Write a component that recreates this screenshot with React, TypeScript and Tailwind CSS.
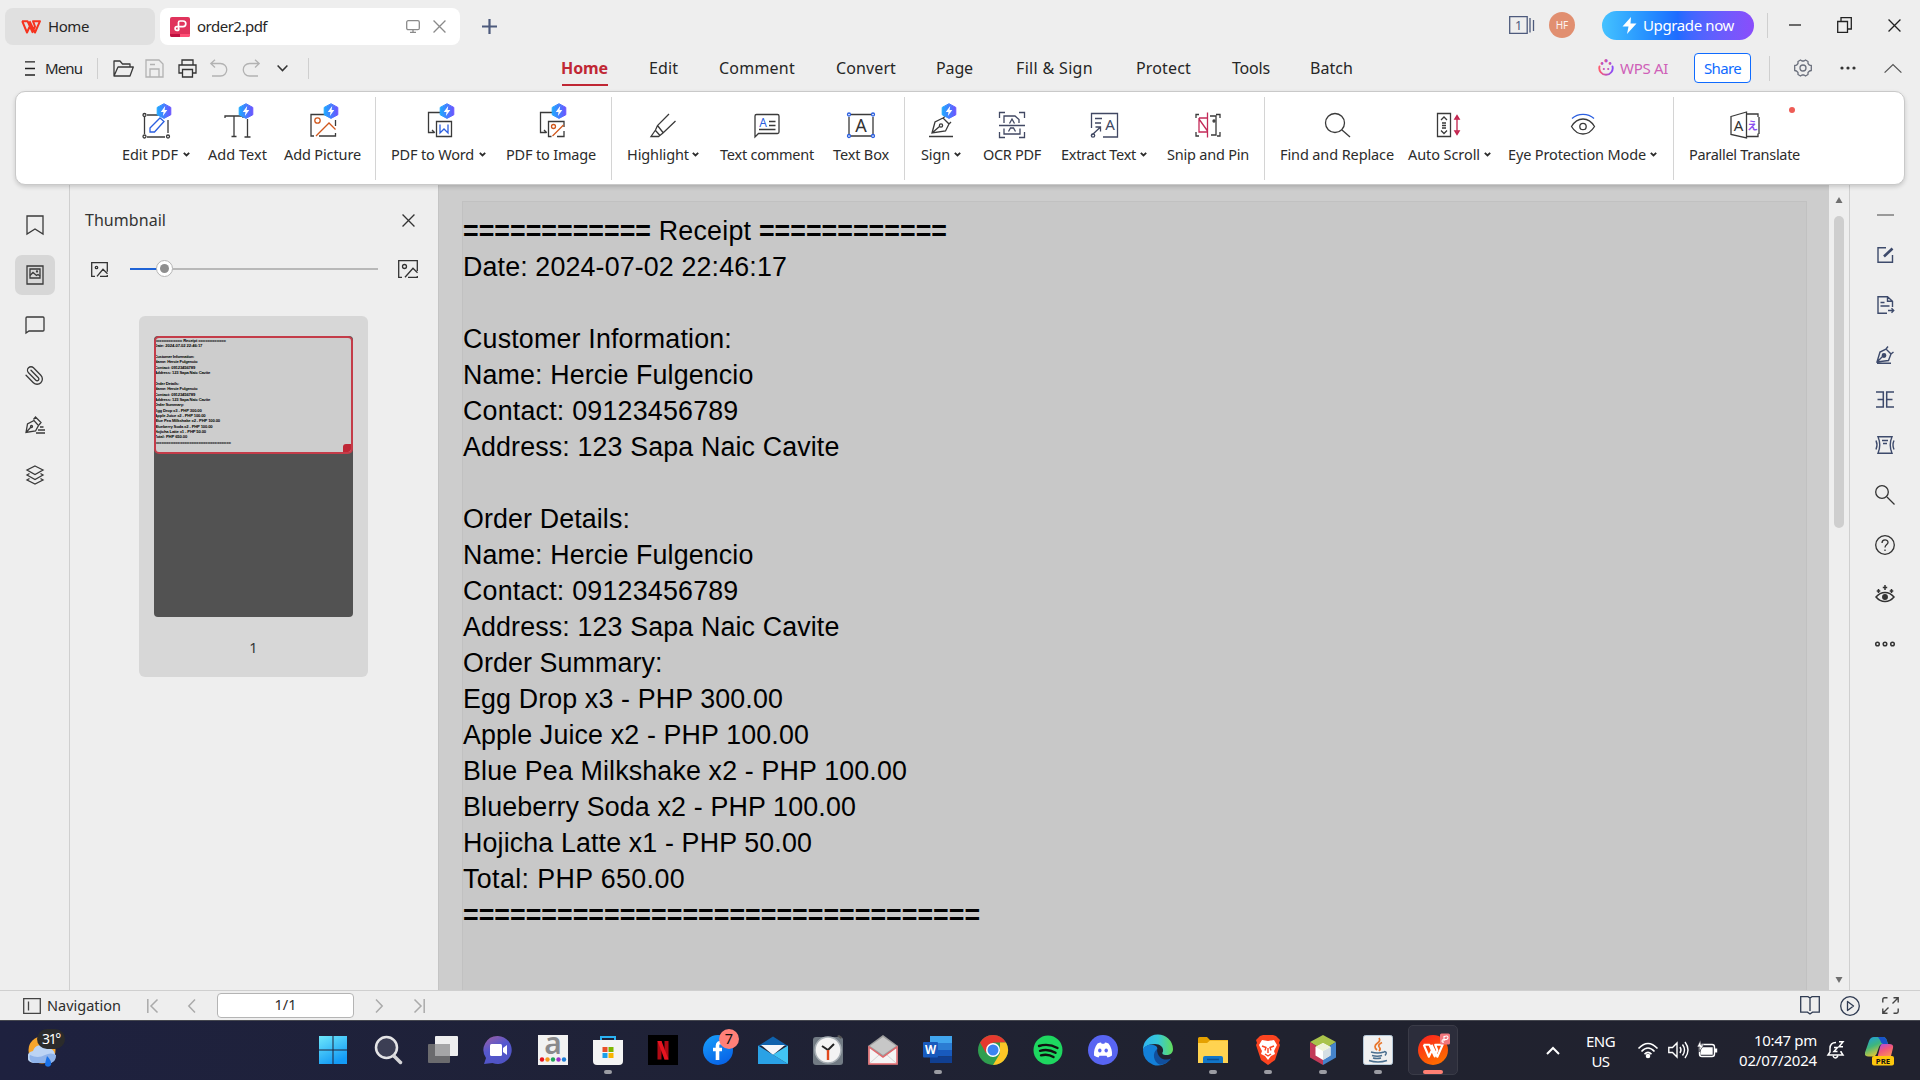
import { useLayoutEffect, useRef, useState, type ReactNode } from "react";
import { Paperclip } from "lucide-react";

const UI = "font-['Noto_Sans',sans-serif]";

/* Single-line label whose tracking is adjusted so that it fills a fixed width. */
function Fit({ w, t, className = "" }: { w: number; t: string; className?: string }) {
  const ref = useRef<HTMLSpanElement>(null);
  const [ls, setLs] = useState(0);
  useLayoutEffect(() => {
    if (ref.current) setLs((w - ref.current.getBoundingClientRect().width) / t.length);
  }, [w, t]);
  return (
    <span className={"inline-block shrink-0 whitespace-pre " + className} style={{ width: w }}>
      <span ref={ref} style={{ letterSpacing: ls }}>{t}</span>
    </span>
  );
}

function Ico({ w, h, sw = 1.3, className = "", children }: { w: number; h: number; sw?: number; className?: string; children: ReactNode }) {
  return (
    <svg width={w} height={h} viewBox={`0 0 ${w} ${h}`} fill="none" stroke="currentColor" strokeWidth={sw} className={"shrink-0 overflow-visible " + className}>
      {children}
    </svg>
  );
}

const Glyph = ({ x, y, s, c = "#333", t, b = "400" }: { x: number; y: number; s: number; c?: string; t: string; b?: string }) => (
  <text x={x} y={y} fontSize={s} fill={c} stroke="none" textAnchor="middle" fontWeight={b} fontFamily="Noto Sans, Noto Sans CJK JP, sans-serif">{t}</text>
);

function Badge() {
  return (
    <g stroke="none">
      <path d="M26 .7 32.8 4.4v7.4L26 15.4 19.2 11.8V4.4z" fill="url(#vip)" stroke="url(#vip)" strokeWidth="1" strokeLinejoin="round" />
      <path d="M27.2 3 22.8 8.900h2.7L24.900 13l4.400-6h-2.700z" fill="#fff" />
    </g>
  );
}

type Item = { t: string; lw: number; box: string; icon: ReactNode; drop?: boolean; dot?: boolean };

const DocTo = (
  <path d="M27 14V9.500H7.500V29.500h6M11 27l2.800 2.800" />
);

const groups: Item[][] = [
  [
    { t: "Edit PDF", lw: 56, box: "ml-[106px] w-[68px]", drop: true, icon: <>
      <path d="M9 12h16M30 17v13M9 34h18M6.500 14v17" /><circle cx="6.500" cy="12" r="1.500" /><circle cx="6.500" cy="33.500" r="1.500" /><circle cx="30" cy="33.500" r="1.500" />
      <path d="m12 25 10-10 4 3.500L16.500 29H12z" stroke="#2b5fe0" /><Badge /></> },
    { t: "Add Text", lw: 59, box: "ml-[18px] w-[59px]", icon: <><path d="M5 15v-2h18v2M14 13v20M11.500 33.500h5M27.500 16v18M24.500 34h6" /><Badge /></> },
    { t: "Add Picture", lw: 77, box: "ml-[17px] w-[77px]", icon: <>
      <path d="M20 11.500H6V33h3M30.500 17v6M30.500 30v3H14" /><circle cx="12.500" cy="17.500" r="2.700" stroke="#d0571c" /><path d="m11 33 13-13 6.500 6.500" stroke="#d0571c" /><Badge /></> },
  ],
  [
    { t: "PDF to Word", lw: 83, box: "ml-[15px] w-[95px]", drop: true, icon: <>{DocTo}<path d="M15.500 18.500h15v15h-15z" /><path d="M19 21.500v8.500l4-4 4 4v-8.500" stroke="#2b5fe0" /><Badge /></> },
    { t: "PDF to Image", lw: 90, box: "ml-[20px] w-[90px]", icon: <>{DocTo}<path d="M31 24v-5.500H15.500v15h3M31 28v5.500h-7" /><circle cx="20.500" cy="23.500" r="2" stroke="#d0571c" /><path d="m19.500 33 11-11" stroke="#d0571c" /><Badge /></> },
  ],
  [
    { t: "Highlight", lw: 62, box: "ml-[15px] w-[72px]", drop: true, icon: <path d="M24 11 12.500 22.500l-2 4.500L6 33.500h7.500l4.500-3.500L30.500 18M12.500 22.500l5.500 7M10.500 27.500l4.500 5" /> },
    { t: "Text comment", lw: 94, box: "ml-[21px] w-[94px]", icon: <><path d="M6 34V13a1.500 1.500 0 0 1 1.500-1.500h21A1.500 1.500 0 0 1 30 13v16a1.500 1.500 0 0 1-1.500 1.500H9.500z" /><path d="M20 18.500h6.500M20 22.500h6.500M10 26.500h16.500" /><Glyph x={14} y={24} s={12} c="#2b5fe0" t="A" /></> },
    { t: "Text Box", lw: 56, box: "ml-[19px] w-[56px]", icon: <><path d="M8 11.500h20M8 33h20M6 14v17M30 14v17" /><g stroke="#2b5fe0"><circle cx="6" cy="11.500" r="1.500" /><circle cx="30" cy="11.500" r="1.500" /><circle cx="6" cy="33" r="1.500" /><circle cx="30" cy="33" r="1.500" /></g><Glyph x={18} y={29} s={18} t="A" /></> },
  ],
  [
    { t: "Sign", lw: 29, box: "ml-[16px] w-[40px]", drop: true, icon: <><path d="M6 33.500h24M9 30l3-11 8-4 6 6-3.500 7zM9 30l7.500-6.500M20 15l2-1.500M26 21l2-2" /><circle cx="18" cy="22.500" r="1.600" /><Badge /></> },
    { t: "OCR PDF", lw: 58, box: "ml-[22px] w-[58px]", icon: <g stroke="#414863"><path d="M5.500 15v-5.500H11M25 9.500h5.500V15M30.500 29v5.500H25M11 34.500H5.500V29M5 22.500h26M10 20v-7h11l4 3.500V20M10 25.500V31h16v-5.500" /><path d="M15.500 20.500 18 16 20.500 20.500M14.500 28.500l2-3.500h3l2 3.500" /></g> },
    { t: "Extract Text", lw: 75, box: "ml-[20px] w-[86px]", drop: true, icon: <g stroke="#414863"><path d="M5.500 25V10.500h26V34H17M6 32l8.500-8M9.500 24h5v4.500M9 15.500h7M9 20h6" /><circle cx="7" cy="32.500" r="1.700" /><Glyph x={24} y={27} s={15} c="#414863" t="A" /></g> },
    { t: "Snip and Pin", lw: 82, box: "ml-[20px] w-[82px]", icon: <><path d="M9 11.500H6V15M6 29v4h3M20 13h6v19h-5M26 11.500h4V15M30 29v4h-3" /><path d="M17.500 9.500v25M9 15h8.500M9 15v14h8.500M9 16l8.500 12" stroke="#c32a58" /><circle cx="24" cy="18" r="1" /></> },
  ],
  [
    { t: "Find and Replace", lw: 114, box: "ml-[15px] w-[114px]", icon: <><circle cx="16" cy="20" r="9.500" /><path d="m23 27 8 7" /></> },
    { t: "Auto Scroll", lw: 72, box: "ml-[14px] w-[83px]", drop: true, icon: <><path d="M5.500 10.500h13v23h-13zM9 17l3-3 3 3M9 27.500l3 3 3-3M10 20h4M10 22.500h4M10 25h4" /><path d="M25 12v20M22.800 16l2.200-3.500 2.200 3.500zM22.800 28l2.200 3.500 2.200-3.500z" stroke="#c3224d" /></> },
    { t: "Eye Protection Mode", lw: 138, box: "ml-[17px] w-[149px]", drop: true, icon: <><path d="M6.500 23.500c3-5 7-7.500 11.500-7.500s8.500 2.500 11.500 7.500c-3 5-7 7.500-11.500 7.500s-8.500-2.500-11.500-7.500z" /><circle cx="18" cy="23.500" r="3.200" /><path d="M7 15.500c6-5.500 16-5.500 22 0" stroke="#2b5fe0" /></> },
  ],
  [
    { t: "Parallel Translate", lw: 111, box: "ml-[15px] w-[111px]", dot: true, icon: <><path d="M4 13.500 19.500 9v26L4 31.500zM20 11h11v3M20 33.500h11v-3M32 14v17" /><Glyph x={11.500} y={27.500} s={15} t="A" /><Glyph x={25.500} y={27} s={11} c="#8a4df0" t="え" b="700" /></> },
  ],
];

const sepMargin = ["", "ml-[14px]", "ml-[15px]", "ml-[15px]", "ml-[15px]", "ml-[16px]"];

const Chev = ({ className = "" }: { className?: string }) => (
  <Ico w={7} h={5} sw={1.8} className={className}><path d="m.8.800 2.700 2.700L6.200.800" /></Ico>
);

function Ribbon() {
  return (
    <div className="relative z-10 mx-[15px] flex h-[94px] shrink-0 rounded-[10px] border border-[#c9c9c9] bg-white shadow-[0_2px_4px_rgba(0,0,0,0.16)]">
      {groups.map((g, gi) => (
        <div key={gi} className="flex">
          {gi > 0 && <div className={"mt-[5px] h-[83px] w-px bg-[#d4d4d4] " + sepMargin[gi]} />}
          {g.map((it) => (
            <div key={it.t} className={"relative flex shrink-0 flex-col items-center pt-[11px] " + it.box}>
              <Ico w={36} h={36} className="text-[#3a3a3a]">{it.icon}</Ico>
              <div className="mt-[5px] flex w-full items-center justify-between text-[14.5px] leading-[20px] text-[#2c2c2c]">
                <Fit w={it.lw} t={it.t} />
                {it.drop && <Chev className="mt-px" />}
              </div>
              {it.dot && <span className="absolute right-[5px] top-[15px] h-[6px] w-[6px] rounded-full bg-[#ee5c55]" />}
            </div>
          ))}
        </div>
      ))}
    </div>
  );
}

const WpsMark = ({ w, h, c, sw }: { w: number; h: number; c: string; sw: number }) => (
  <svg width={w} height={h} viewBox="0 0 20 14" fill="none" stroke={c} strokeWidth={sw} strokeLinejoin="round" className="shrink-0">
    <path d="M1 1.200h5.500l5 11L14 6.500 12 1.200h7L14 12.500 8.500 1.200M1.200 1.200 6 12.500 8.500 7" />
  </svg>
);

const Cross = ({ s, sw = 1.2, className = "" }: { s: number; sw?: number; className?: string }) => (
  <svg width={s} height={s} viewBox="0 0 12 12" stroke="currentColor" strokeWidth={sw} className={"shrink-0 " + className}><path d="m.5.500 11 11M11.500.500l-11 11" /></svg>
);

function TitleBar() {
  return (
    <div className="flex h-[50px] shrink-0 items-start pl-[5px] text-[15px] leading-[37px] text-[#262626]">
      <div className="mt-2 flex h-[37px] w-[150px] items-center rounded-lg bg-[#e0e0e0] pl-4">
        <WpsMark w={20} h={14} c="#f5331f" sw={2} />
        <Fit w={41} t="Home" className="ml-[7px]" />
      </div>
      <div className="ml-[5px] mt-2 flex h-[37px] w-[300px] items-center rounded-lg bg-white pl-[10px]">
        <svg width="20" height="20" viewBox="0 0 20 20" className="shrink-0">
          <rect width="20" height="20" rx="2" fill="#e0335c" />
          <path d="M0 17h10v3H2a2 2 0 0 1-2-2z" fill="#c01040" /><path d="M10 17h10v1a2 2 0 0 1-2 2h-8z" fill="#ff5076" />
          <path d="M8.500 12.800V5.500q0-1.500 1.500-1.500h3a2.700 2.700 0 0 1 0 5.600H7a1.900 1.900 0 0 0 0 3.800q2 0 2-2" fill="none" stroke="#fff" strokeWidth="1.700" />
        </svg>
        <Fit w={70} t="order2.pdf" className="ml-[7px]" />
        <Ico w={14} h={13} className="ml-[139px] text-[#8a8a8a]"><rect x=".7" y=".7" width="12.600" height="9" rx="1.500" /><path d="M7 10v2.300M4 12.300h6" /></Ico>
        <Cross s={13} className="ml-[13px] text-[#8a8a8a]" />
      </div>
      <Ico w={15} h={15} sw={2.2} className="ml-[22px] mt-[19px] text-[#4d5a7c]"><path d="M7.500 0v15M0 7.500h15" /></Ico>
      <div className="ml-auto flex h-[50px] items-center">
        <Ico w={26} h={18} className="text-[#4d5a7c]"><path d="M.7.700h17.500v16.600H.7zM21 2v14.500M24.500 4v11" /><Glyph x={9.500} y={14} s={12.500} c="#4d5a7c" t="1" /></Ico>
        <div className="mr-[27px] ml-[14px] flex h-[26px] w-[26px] items-center justify-center rounded-full bg-[#e18f70] text-[10px] text-white/90">HF</div>
        <div className="mr-[13px] flex h-[29px] w-[152px] items-center rounded-full bg-linear-to-r from-[#45c2ff] via-[#1f6bff] to-[#8a4dfb] pl-[20px] text-[15px] text-white">
          <svg width="15" height="17" viewBox="0 0 15 17" className="shrink-0"><path d="M9 0 .5 9.500H6.500L5 17 14.500 6.500H8.500z" fill="#fff" /></svg>
          <Fit w={91} t="Upgrade now" className="ml-[6px]" />
        </div>
        <div className="h-[25px] w-px bg-[#cfcfcf]" />
        <Ico w={12} h={2} sw={1.3} className="ml-[21px] text-[#222]"><path d="M0 1h12" /></Ico>
        <Ico w={15} h={16} className="ml-9 text-[#222]"><path d="M.7 4.500h9.800v10.800H.7zM4 4V.700h10.300v11.300H11" /></Ico>
        <Cross s={13} className="ml-9 mr-[19px] text-[#222]" />
      </div>
    </div>
  );
}

const menuTabs: [string, number, string][] = [
  ["Edit", 29, "ml-[40px]"], ["Comment", 76, "ml-[41px]"], ["Convert", 60, "ml-[41px]"], ["Page", 37, "ml-[40px]"],
  ["Fill & Sign", 77, "ml-[43px]"], ["Protect", 55, "ml-[43px]"], ["Tools", 38, "ml-[41px]"], ["Batch", 43, "ml-[40px]"],
];

function MenuBar() {
  return (
    <div className="flex h-[41px] shrink-0 items-center pb-[5px] text-[15px] leading-[20px] text-[#262626]">
      <Ico w={10} h={15} className="ml-[25px] text-[#222]"><path d="M0 .800h10M0 7.500h10M0 14h10" /></Ico>
      <Fit w={37} t="Menu" className="ml-[10px]" />
      <div className="ml-[15px] h-[21px] w-px bg-[#cfcfcf]" />
      <Ico w={21} h={17} className="ml-[15px] text-[#3a3a3a]"><path d="M1 16V1h6l2.500 3H17v3M1 16 5 7h15.300L17 16z" strokeLinejoin="round" /></Ico>
      <Ico w={19} h={19} className="ml-[11px] text-[#b2b2b2]"><path d="M1 1h13l4 4v13H1zM5 18v-8h9v8M5 5.500h5" /></Ico>
      <Ico w={19} h={19} className="ml-[14px] text-[#333]"><path d="M4 6V1h11v5M4 14H1V6h17v8h-3M4.500 10.500h10V18h-10z" /></Ico>
      <Ico w={18} h={18} className="ml-[13px] text-[#b2b2b2]"><path d="M5 .700.800 4.500 5 8.500M1 4.500h9.500a6 6 0 0 1 0 12.500H2" /></Ico>
      <Ico w={18} h={18} className="ml-[14px] text-[#b2b2b2]"><path d="m13 .700 4.200 3.800L13 8.500M17 4.500H7.500a6 6 0 0 0 0 12.500H16" /></Ico>
      <Ico w={11} h={7} sw={1.5} className="ml-[17px] text-[#333]"><path d="m.6.600 4.900 5 4.900-5" /></Ico>
      <div className="ml-[20px] h-[21px] w-px bg-[#cfcfcf]" />
      <div className="relative ml-[252px] mr-px text-[16px] font-bold text-[#c02734]">
        <Fit w={47} t="Home" />
        <div className="absolute -bottom-[8px] left-px h-[2px] w-[46px] bg-[#c02734]" />
      </div>
      {menuTabs.map(([t, w, ml]) => <Fit key={t} w={w} t={t} className={"text-[16px] " + ml} />)}
      <svg width="16" height="18" viewBox="0 0 16 18" fill="none" stroke="url(#ai)" strokeWidth="1.900" className="ml-auto shrink-0">
        <path d="M1.500 7.500a6.700 6.700 0 1 0 13 0" strokeLinecap="round" /><g fill="url(#ai)" stroke="none"><circle cx="8" cy="1.800" r="1.700" /><circle cx="4" cy="4.500" r="1.400" /><circle cx="12" cy="4.500" r="1.400" /><circle cx="5.800" cy="10" r="1.100" /><circle cx="10.200" cy="10" r="1.100" /></g>
      </svg>
      <Fit w={48} t="WPS AI" className="ml-[6px] text-[#cf5fb8]" />
      <div className="ml-[26px] flex h-[30px] w-[57px] items-center justify-center rounded-[4px] border border-[#0f6bff] bg-white text-[#0f6bff]"><Fit w={37} t="Share" /></div>
      <div className="ml-[18px] h-[25px] w-px bg-[#cfcfcf]" />
      <Ico w={18} h={18} className="ml-[24px] text-[#6a6f7c]"><path d="M6.500 1 8 2h2l1.500-1 2.500 1.500v2l1.500 1.700 1.800.300v5l-1.800.500L14 13.500v2L11.500 17 10 16H8l-1.500 1L4 15.500v-2l-1.500-1.500-1.800-.500v-5l1.800-.300L4 4.500v-2z" strokeLinejoin="round" /><circle cx="9" cy="9" r="3" /></Ico>
      <Ico w={16} h={4} className="ml-[28px] text-[#333]"><g fill="currentColor" stroke="none"><circle cx="2" cy="2" r="1.600" /><circle cx="8" cy="2" r="1.600" /><circle cx="14" cy="2" r="1.600" /></g></Ico>
      <Ico w={18} h={9} className="ml-[28px] mr-[18px] text-[#555]"><path d="m.6 8.600 8.400-8 8.400 8" /></Ico>
    </div>
  );
}

const railIcons: ReactNode[] = [
  <Ico w={18} h={20} key="b"><path d="M1 1h16v18l-8-5-8 5z" /></Ico>,
  <Ico w={18} h={20} key="t"><path d="M1 1h16v18H1zM4 4h10v9H4z" /><path d="m4 10.500 3-3 3.500 3 1.500-1 2 1.500" /><circle cx="11" cy="6.500" r=".5" /></Ico>,
  <Ico w={20} h={18} key="c"><path d="M1 17V2q0-1 1-1h16q1 0 1 1v12q0 1-1 1H4z" /></Ico>,
  <Paperclip key="a" width={21} height={21} strokeWidth={1.5} className="-scale-x-100" />,
  <Ico w={20} h={18} key="p"><path d="M1 16.500 2.500 8l6.500-3.500 4.500 5L10.500 15zM1 16.500l5-5.500M8.500 3.500 10.500 1l5.500 5.500-2 2.500M15 11h3.500M13 14h7M11 17h9" /><circle cx="6.500" cy="10.500" r="1" /></Ico>,
  <Ico w={18} h={20} key="l"><path d="m9 1 8 4-8 4.500L1 5zM3.500 8.500 1 10l8 4.500 8-4.500-2.500-1.500M3.500 13.500 1 15l8 4 8-4-2.500-1.500" /></Ico>,
];

const receipt = [
  ["============ Receipt ============", 484], ["Date: 2024-07-02 22:46:17", 324], ["", 0],
  ["Customer Information:", 269], ["Name: Hercie Fulgencio", 290.5], ["Contact: 09123456789", 275.5], ["Address: 123 Sapa Naic Cavite", 376.5], ["", 0],
  ["Order Details:", 167], ["Name: Hercie Fulgencio", 290.5], ["Contact: 09123456789", 275.5], ["Address: 123 Sapa Naic Cavite", 376.5], ["Order Summary:", 199.5],
  ["Egg Drop x3 - PHP 300.00", 320], ["Apple Juice x2 - PHP 100.00", 346], ["Blue Pea Milkshake x2 - PHP 100.00", 444], ["Blueberry Soda x2 - PHP 100.00", 393], ["Hojicha Latte x1 - PHP 50.00", 349], ["Total: PHP 650.00", 222],
  ["=================================", 517],
] as [string, number][];

const RULE_STEP = 15.67;

/* One receipt row; runs of "=" are drawn heavier than the words. */
function ReceiptRow({ t, w }: { t: string; w: number }) {
  const parts = t.split(/(=+)/).filter(Boolean);
  const ruled = (t.match(/=/g) ?? []).length * RULE_STEP;
  return (
    <div className="flex h-[36.040px]">
      {parts.map((p, i) => p[0] === "="
        ? <Fit key={i} w={p.length * RULE_STEP} t={p} className="font-bold" />
        : <Fit key={i} w={w - ruled} t={p} />)}
    </div>
  );
}

function LeftPanel() {
  return (
    <>
      <div className="flex w-[70px] shrink-0 flex-col items-center gap-[10px] border-r border-[#cfcfcf] pt-[21px] text-[#3a3a3a]">
        {railIcons.map((ic, i) => <div key={i} className={"flex h-10 w-10 items-center justify-center rounded-[7px] " + (i === 1 ? "bg-[#d7d7d7]" : "")}>{ic}</div>)}
      </div>
      <div className="flex w-[368px] shrink-0 flex-col text-[#333]">
        <div className="mt-[24px] flex h-6 items-center pl-[15px] pr-[23px] text-[16px] leading-6">
          <Fit w={81} t="Thumbnail" />
          <Cross s={13} className="ml-auto" />
        </div>
        <div className="mt-[26px] flex h-[22px] items-center pl-[21px]">
          <Ico w={17} h={15}><path d="M4 14.300H.7V.700h15.600v9M16.300 13v1.300H9M6 14.300l6-7 4.500 4.500" /><circle cx="5.500" cy="5.500" r="1.200" /></Ico>
          <div className="relative ml-[22px] h-[2px] w-[248px] bg-[#b8b8b8]">
            <div className="h-[2px] w-[30px] bg-[#1f63d6]" />
            <div className="absolute -top-[8px] left-[26px] flex h-[17px] w-[17px] items-center justify-center rounded-full border border-[#b5b5b5] bg-white"><div className="h-[9px] w-[9px] rounded-full bg-[#8e8e8e]" /></div>
          </div>
          <Ico w={20} h={18} className="ml-5"><path d="M4 17.300H.7V.700h18.600V11M19.300 16v1.300H10M7 17.300l8-9 4.500 4.500" /><circle cx="6.500" cy="6.500" r="2" /></Ico>
        </div>
        <div className="ml-[69px] mt-[36px] h-[361px] w-[229px] rounded-[6px] bg-[#d7d7d7] px-[15px] pt-5">
          <div className="h-[281px] w-[199px] overflow-hidden rounded-[4px] bg-[#525252]">
            <div className="relative h-[118px] overflow-hidden rounded-[5px] border-2 border-[#c43c49] bg-[#cdcdcd] font-['Liberation_Sans',sans-serif] text-[4.2px] font-bold leading-[5.37px] text-black">
              {receipt.map(([t, w], i) => <div key={i} className="h-[5.370px]">{t && <Fit w={w * 0.1475} t={t} className="-ml-[1.5px] align-top" />}</div>)}
              <div className="absolute bottom-0 right-0 h-2 w-2 rounded-tl-[3px] bg-[#bf2736]" />
            </div>
          </div>
          <div className="mt-[19px] text-center text-[14.500px] leading-[22px]">1</div>
        </div>
      </div>
    </>
  );
}

function Body() {
  return (
    <div className="-mt-px flex min-h-0 flex-1">
      <LeftPanel />
      <div className="flex min-w-0 flex-1 border-l border-[#c4c4c4] bg-[#cdcdcd] pl-[23px] pr-[22px] pt-[17px]">
        <div className="flex-1 border border-b-0 border-[#c1c1c1] bg-[#c8c8c8] pt-[10.500px] font-['Liberation_Sans',Arial,sans-serif] text-[26.800px] leading-[36.040px] text-black">
          {receipt.map(([t, w], i) => <ReceiptRow key={i} t={t} w={w} />)}
        </div>
      </div>
      <div className="flex w-5 shrink-0 flex-col items-center">
        <svg width="8" height="6" viewBox="0 0 8 6" className="mt-[13px] shrink-0"><path d="M4 0l3.500 6h-7z" fill="#6f6f6f" /></svg>
        <div className="mt-[13px] h-[312px] w-[10px] rounded-full bg-[#cecece]" />
        <svg width="8" height="6" viewBox="0 0 8 6" className="mb-[7px] mt-auto shrink-0"><path d="M4 6 .500 0h7z" fill="#6f6f6f" /></svg>
      </div>
      <div className="flex w-[71px] shrink-0 flex-col items-center border-l border-[#cfcfcf] text-[#3d4a6b]">
        <div className="mt-[30px] h-[2px] w-[17px] bg-[#999]" />
        <Ico w={17} h={16} className="mt-[31px]" sw={1.4}><path d="M9 .700H1v14.600h14.500V8" /><path d="m7 9.500 8.500-8" strokeWidth="2.600" /></Ico>
        <Ico w={17} h={18} className="mt-[33px]" sw={1.4}><path d="M10 17.300H1V.700h9.500l5 4.500V11M10.500.700v4.500h5M3.500 6.500h4M3.500 10h9M11 14.500h5.500M14.500 12.300l2.200 2.200-2.200 2.200" /></Ico>
        <Ico w={18} h={18} className="mt-[32px]" sw={1.4}><path d="m1 16 3-10 6-3 5 5-2.500 6.500zM1 16l6-6M10 3l2-2.500M15 8l2.500-2M1 17.300h14" /><circle cx="8" cy="9.500" r="1.700" fill="currentColor" /></Ico>
        <Ico w={18} h={17} className="mt-[27px]" sw={1.5}><path d="M0 1h7.300v15H0M1.500 8.500h6M18 1h-7.300v15H18M16.500 8.500h-6" /></Ico>
        <Ico w={20} h={18} className="mt-[28px]" sw={1.4}><path d="M3 .800h14q-3.500 8.200 0 16.400H3Q6.500 9 3 .800zM1 4.500q2 4.500 0 9M19 4.500q-2 4.500 0 9M7 4.500h6M8 7.500h4" /></Ico>
        <Ico w={20} h={20} className="mt-[31px] text-[#333]"><circle cx="7" cy="7" r="6.300" /><path d="m12 12 7.500 7.500" /></Ico>
        <Ico w={20} h={20} className="mt-[30px] text-[#333]"><circle cx="10" cy="10" r="9.300" /><path d="M7 8c0-4 6-4 6-.500 0 2-3 2.300-3 5M10 14.500v1.500" /></Ico>
        <Ico w={20} h={20} className="mt-[29px] text-[#333]" sw={1.5}><path d="M1 13c5-6 13-6 18 0-5 6-13 6-18 0z" /><circle cx="10" cy="13" r="2.200" fill="currentColor" /><path d="M10 1v5M7.800 3.500h4.400M3.500 5v4M1.700 7h3.600M16.500 5v4M14.700 7h3.600" /></Ico>
        <Ico w={20} h={6} className="mt-[37px] text-[#333]" sw={1.500}><circle cx="2.500" cy="3" r="1.800" /><circle cx="10" cy="3" r="1.800" /><circle cx="17.500" cy="3" r="1.800" /></Ico>
      </div>
    </div>
  );
}

function StatusBar() {
  return (
    <div className="flex h-[30px] shrink-0 items-center border-t border-[#cfcfcf] bg-[#eee] text-[14.500px] leading-5 text-[#2c2c2c]">
      <Ico w={18} h={16} className="ml-[23px] text-[#444]"><path d="M.7.700h16.600v14.600H.7zM5.500 3.500v9" /></Ico>
      <Fit w={74} t="Navigation" className="-mt-[2px] ml-[6px]" />
      <Ico w={11} h={14} className="ml-[26px] text-[#aaa]" sw={1.500}><path d="M.8 0v14M10.500.500 4 7l6.500 6.500" /></Ico>
      <Ico w={8} h={14} className="ml-[30px] text-[#aaa]" sw={1.500}><path d="M7 .500.800 7 7 13.500" /></Ico>
      <div className="ml-[21px] h-[25px] w-[137px] rounded-[4px] border border-[#b4b4b4] bg-white text-center leading-[21px]">1/1</div>
      <Ico w={8} h={14} className="ml-[21px] text-[#aaa]" sw={1.500}><path d="M1 .500 7.200 7 1 13.500" /></Ico>
      <Ico w={11} h={14} className="ml-[31px] text-[#aaa]" sw={1.500}><path d="M10.200 0v14M.500.500 7 7 .500 13.500" /></Ico>
      <Ico w={20} h={19} className="ml-auto text-[#2f3b52]"><path d="M10 2.500V15M.7.700H8l2 1.300L12 .700h7.300v15.500H12.500L10 18l-2.500-1.800H.7z" /></Ico>
      <Ico w={20} h={20} className="ml-5 text-[#2f3b52]"><circle cx="10" cy="10" r="9.300" /><path d="M7.500 5.500v9l6-4.500z" strokeLinejoin="round" /></Ico>
      <Ico w={17} h={17} className="ml-[22px] mr-[21px] text-[#444]" sw={1.400}><path d="M.8 5.500V2.500Q.8.800 2.500.800h3M16.200 11.500v3q0 1.700-1.700 1.700h-3M.8 11.500v4.700h4.700M11.500.800h4.700v4.700M16 1l-5.500 5.500M6.500 10.500 1 16" /></Ico>
    </div>
  );
}

type TaskApp = { k: string; run?: boolean; active?: boolean; el: ReactNode };
const S = ({ children }: { children: ReactNode }) => <svg width="30" height="30" viewBox="0 0 30 30" className="overflow-visible">{children}</svg>;
const dots = ["#e8141c", "#f59a1b", "#21a35a", "#9b30c9", "#1c7ed6"];

const apps: TaskApp[] = [
  { k: "start", el: <S><path d="M1 1h13.500v13.500H1zM15.500 1H29v13.500H15.500zM1 15.500h13.500V29H1zM15.500 15.500H29V29H15.500z" fill="url(#win)" /></S> },
  { k: "search", el: <S><circle cx="13.500" cy="12.500" r="10.500" fill="#ffffff22" stroke="#e4e4e6" strokeWidth="2.500" /><path d="m21 21 6.500 6.500" stroke="#d5d5d8" strokeWidth="3.500" strokeLinecap="round" /></S> },
  { k: "taskview", el: <S><rect x="7" y="1" width="23" height="20" rx="1" fill="#eeeeef" /><rect x="0" y="9" width="22" height="19" rx="1" fill="#6b6b6e" /><path d="M7 9h15v12H7z" fill="#a5a5a7" /></S> },
  { k: "chat", el: <S><path d="M15 1a14 14 0 1 1-5.500 27L1 29l2-6A14 14 0 0 1 15 1z" fill="url(#chat)" /><rect x="7" y="9" width="12" height="12" rx="1.500" fill="#fff" /><path d="m20 13 4-3v10l-4-3z" fill="#fff" /></S> },
  { k: "amazon", el: <S><rect x="0" y="0" width="30" height="30" fill="#f2f2f2" /><Glyph x={15} y={19} s={30} c="#8a8a8c" t="a" b="600" />{dots.map((c, i) => <circle key={c} cx={4 + i * 5.500} cy="24.500" r="2.200" fill={c} />)}</S> },
  { k: "store", run: true, el: <S><path d="M8 7V2h14v5" fill="none" stroke="#2ab2f2" strokeWidth="2" /><path d="M0 5h30v21a4 4 0 0 1-4 4H4a4 4 0 0 1-4-4z" fill="#f4f4f4" /><path d="M9.500 12h5v5h-5z" fill="#e8512a" /><path d="M15.500 12h5v5h-5z" fill="#7db700" /><path d="M9.500 18h5v5h-5z" fill="#1ba0ea" /><path d="M15.500 18h5v5h-5z" fill="#f8b400" /></S> },
  { k: "netflix", el: <S><path d="M0 0h30v30H0z" fill="#000" /><path d="M9.500 6h4v18.500h-4zM16.500 6h4v18.500h-4z" fill="#b00a14" /><path d="M9.500 6h4l7 18.500h-4z" fill="#e81420" /></S> },
  { k: "facebook", el: <S><circle cx="15" cy="15" r="15" fill="url(#fb)" /><path d="M14.500 25V10.500q0-3.500 5-3M10 14.500h9" stroke="#fff" strokeWidth="3.600" fill="none" /><circle cx="26" cy="4" r="10" fill="#ff8078" /><Glyph x={26} y={9} s={14.500} c="#111" t="7" /></S> },
  { k: "mail", el: <S><path d="M0 11 15 1.500 30 11z" fill="#0f62ad" /><path d="M3 10h24L15 20z" fill="#f3f6fa" /><path d="M0 10.500 30 29H0z" fill="#2aa2e6" /><path d="m30 10.500-15 9.200L30 29z" fill="#41c4f4" /></S> },
  { k: "clock", el: <S><rect y="2" width="30" height="28" rx="3" fill="#727b84" /><path d="m24 1 4 3 1-2-3-2z" fill="#555" /><circle cx="15" cy="15" r="13" fill="#f3f3f3" stroke="#a9b0b6" strokeWidth="1.500" /><path d="m9 11 6 4 6-6" fill="none" stroke="#222" strokeWidth="2" /><path d="M15 15v10" stroke="#e1481c" strokeWidth="2.400" /></S> },
  { k: "gmail", el: <S><path d="M0 11 15 0l15 11v18.500H0z" fill="#9e9e9e" /><path d="M2 11 15 2l13 9-13 9z" fill="#c7c7c7" /><path d="M1 12 15 22 29 12v17H1z" fill="#f5f5f5" stroke="#e2676c" strokeWidth="1.500" /><path d="m2 28 9-8M28 28l-9-8" stroke="#d5d5d5" /></S> },
  { k: "word", run: true, el: <S><path d="M7 1h22v7H7z" fill="#41a5ee" /><path d="M7 8h22v7H7z" fill="#2b7cd3" /><path d="M7 15h22v6.500H7z" fill="#185abd" /><path d="M7 21.500h22V28H7z" fill="#103f91" /><rect y="7" width="15" height="15.500" rx="1" fill="#185abd" /><Glyph x={7.500} y={19} s={11.500} c="#fff" t="W" b="700" /></S> },
  { k: "chrome", el: <S><circle cx="15" cy="15" r="15" fill="#2f9e4f" /><path d="M2 7.500a15 15 0 0 1 26 0H15L8 18z" fill="#e5392f" /><path d="M28 7.500A15 15 0 0 1 15 30l7-11.500V7.500z" fill="#fcc626" /><circle cx="15" cy="15" r="7" fill="#fff" /><circle cx="15" cy="15" r="5.500" fill="#3b83f0" /></S> },
  { k: "spotify", el: <S><circle cx="15" cy="15" r="14.500" fill="#1ed760" /><path d="M6 11q9.500-3 18.500 2M7 15.800q8.500-2.300 15.500 2M8 20.300q7-1.800 12.500 1.700" fill="none" stroke="#111" strokeWidth="2.400" strokeLinecap="round" /></S> },
  { k: "discord", el: <S><circle cx="15" cy="15" r="15" fill="#5865f2" /><path d="M9.500 8.500q2-1 3.500-1l.7 1.200h2.600L17 7.500q1.500 0 3.500 1 4 5 3.500 12-2 1.500-4.500 2l-1-1.800h-7l-1 1.800Q8 22 6 20.500 5.500 13.500 9.500 8.500z" fill="#fff" /><ellipse cx="11.800" cy="15.500" rx="1.700" ry="2" fill="#5865f2" /><ellipse cx="18.200" cy="15.500" rx="1.700" ry="2" fill="#5865f2" /></S> },
  { k: "edge", el: <S><path d="M0 15A15 15 0 0 1 30 14c0 5-4 6.500-8 6q-4-.500-2-3.500c1-4-3-7.500-8-7.500C5 9 1 12 0 15z" fill="url(#edge)" /><path d="M0 15c1-4 6-6 10-5 4 .500 5 3 4 5-4 3 0 13 9 11.500l4-2A15 15 0 0 1 0 15z" fill="#1380d8" /><path d="M14 14c-5 4-4 13 3 15.800 5-.300 9-3 11-6.300-6 3-14 0-14-9.500z" fill="#114f9c" /></S> },
  { k: "files", run: true, el: <S><path d="M0 3.500q0-1.500 1.500-1.500H9l3 3h18v8H0z" fill="#e5a100" /><path d="M0 8h9l3-2.500h18V28H0z" fill="#ffd350" /><path d="M5 28v-5q0-2 2-2h16q2 0 2 2v5z" fill="#1276c8" /><path d="M9 24.500h12" stroke="#0b4f91" strokeWidth="1.500" /></S> },
  { k: "brave", run: true, el: <S><path d="m7 1 3-1h10l3 1 4 4-1 3 1 2-5 15-7 5-7-5L3 10l1-2-1-3z" fill="#fb4420" /><path d="m9 5 6 1 6-1 3 5-3 6 1 3-4 2-3 4-3-4-4-2 1-3-3-6z" fill="#fff" /><path d="m9 11 4 1.500-1 3M21 11l-4 1.500 1 3M15 13v5M12 19l3 2 3-2" stroke="#fb4420" strokeWidth="1.400" fill="none" /></S> },
  { k: "netbeans", run: true, el: <S><path d="m15 0 13 7-13 8L2 7z" fill="#a9c34b" /><path d="m2 7 13 8v15L2 22.500z" fill="#c23a58" /><path d="M28 7 15 15v15l13-7.500z" fill="#4584cc" /><path d="m15 8 7.500 4v8.500L15 25l-7.500-4.500V12z" fill="#fff" /><path d="m15 16 7.500-4v8.500L15 25z" fill="#d5dfe4" /><path d="m15 16-7.500-4L15 8l7.500 4z" fill="#eef3d8" /></S> },
  { k: "java", run: true, el: <S><rect x=".500" y=".500" width="29" height="29" rx="2" fill="#f0f0f0" stroke="#b5c8d8" /><path d="M16 3q2 3-2 5.500-4 3 0 6.500M19 7.500q-5 2.500-2.500 5 1.500 1.500-.500 3.500" fill="none" stroke="#e8762c" strokeWidth="1.700" /><path d="M8 17q7 2 13 0M9 20.500q5.500 1.500 10 0M10 23q4 1 8 0M6 25.500q9 3 18 0M21 16.500q4 .500 1 4" fill="none" stroke="#4a6f8f" strokeWidth="1.500" /></S> },
  { k: "wps", run: true, active: true, el: <S><circle cx="15" cy="15" r="15" fill="url(#wps)" /><g transform="translate(4.500 8.500) scale(1.060)"><path d="M1 1.200h5.500l5 11L14 6.500 12 1.200h7L14 12.500 8.500 1.200M1.200 1.200 6 12.500 8.500 7" fill="none" stroke="#fff" strokeWidth="2" strokeLinejoin="round" /></g><rect x="22" y="-1.500" width="10" height="11" rx="1.500" fill="#f2767c" /><path d="M26 6V1.500q4-1.500 4 1t-4 2q-2 0-2 1.500t2 1" fill="none" stroke="#fff" strokeWidth="1.100" /></S> },
];

function Taskbar() {
  return (
    <div className="flex h-[60px] shrink-0 border-t border-[#45474f] bg-linear-to-r from-[#1e213f] via-[#20222f] via-65% to-[#21222f] text-[15px] leading-5 text-white">
      <div className="relative w-[305px] shrink-0 pl-[28px] pt-[11px]">
        <svg width="38" height="36" viewBox="0 0 38 36">
          <circle cx="14" cy="18" r="13.500" fill="#f7a52c" /><path d="M6 31a6 6 0 0 1-1-12 8 8 0 0 1 14-3 8 8 0 0 1 4 15z" fill="#bcd4f4" /><path d="M6 31a6 6 0 0 1-4-8q8 4 15 0 6-3 11 0a8 8 0 0 1-5 8z" fill="#8fb3ea" /><path d="M19 24q5 5 4 9a3.500 3.500 0 0 1-6 0q0-2 2-9z" fill="#1a72e8" />
        </svg>
        <div className="absolute left-[37px] top-[8px] flex h-[20px] w-[28px] items-center justify-center rounded-full bg-[#2b2b2b]"><Fit w={18} t="31°" className="text-[14px]" /></div>
      </div>
      {apps.map((a) => (
        <div key={a.k} className="relative flex w-[55.06px] shrink-0 justify-center pt-[4px]">
          <div className={"flex h-[50px] w-[50px] justify-center rounded-[5px] border pt-[9px] " + (a.active ? "border-[#3a3b47] bg-[#2c2d3b]" : "border-transparent")}>{a.el}</div>
          {a.run && <div className={"absolute top-[49px] h-1 rounded-full " + (a.active ? "w-5 bg-[#ff8073]" : "w-2 bg-[#9b9ca3]")} />}
        </div>
      ))}
      <div className="ml-auto flex items-start">
        <Ico w={14} h={8} sw={2} className="mt-[26px]"><path d="m1 7 6-6 6 6" /></Ico>
        <div className="ml-[26px] mt-[10px] flex flex-col items-center"><Fit w={29} t="ENG" /><Fit w={18} t="US" /></div>
        <Ico w={20} h={16} sw={1.600} className="ml-[23px] mt-[21px]"><path d="M.500 6.500q9.500-10 19 0M3.500 9.500q6.500-7 13 0M6.500 12.300q3.500-3.800 7 0" /><circle cx="10" cy="14" r="1.500" fill="#fff" /></Ico>
        <Ico w={20} h={18} sw={1.400} className="ml-[10px] mt-[20px]"><path d="M.8 6.500h3.700L9 2v14l-4.500-4.500H.8zM12 6q2 3 0 6M14.500 3.500q4 5.500 0 11M17 1q6 8 0 16" /></Ico>
        <Ico w={21} h={18} sw={1.400} className="ml-[9px] mt-[19px]"><rect x="2.500" y="4.500" width="15" height="12" rx="2.500" /><path d="M5 8h10v6H4z" fill="#fff" /><path d="M19 8.500v4" strokeWidth="2.400" /><path d="M3.500 0 0 7h3l-1 5 5-7H4z" fill="#fff" stroke="#21222f" strokeWidth=".6" /></Ico>
        <div className="ml-[20px] mt-[9px] flex w-[79px] flex-col items-end text-[15px]"><Fit w={63} t="10:47 pm" /><Fit w={78} t="02/07/2024" /></div>
        <Ico w={17} h={18} sw={1.500} className="ml-[10px] mt-[20px]"><path d="M9 1.500C5 1.500 3 4 3 7.500V11L1 14h15l-2-3v-1M6 15q2 4 5 0" /><path d="M7 6.500h3.500L7 10.500h3.500M12 .800h4l-4 5h4" /></Ico>
        <svg width="30" height="30" viewBox="0 0 30 30" className="ml-[21px] mr-[25px] mt-[16px] shrink-0">
          <path d="M9 0h9q3 0 4 4l1 3h-5q-3 0-4 3l-2.500 7q-1 2.500-4 2.500H3q-4 0-3-4L4 4q1.500-4 5-4z" fill="url(#cp1)" />
          <path d="M17 7h7q5 0 4 4l-2.500 10H14q-2 0-1-3l2-8q.700-3 2-3z" fill="url(#cp2)" />
          <path d="M13 0h5q3 0 4 4l1 3h-5q-2-.500-3-4z" fill="#1853c9" />
          <rect x="7" y="19" width="22" height="9.500" rx="2" fill="#fdc70d" /><Glyph x={18} y={26.500} s={7.800} c="#111" t="PRE" b="700" />
        </svg>
      </div>
    </div>
  );
}

function Defs() {
  const g: [string, string[], number][] = [
    ["vip", ["#1fa8ff", "#6a55ff"], 0], ["ai", ["#ff5a6e", "#8a4dfb"], 0], ["win", ["#6ee8fb", "#149bf5"], 1], ["chat", ["#a35f9e", "#5558cf", "#4f53c4"], 1],
    ["fb", ["#18a0fb", "#0866e8"], 1], ["edge", ["#2fb4f0", "#36c8d8", "#63dd5a"], 0], ["wps", ["#fb2020", "#ff6a00"], 1], ["cp1", ["#1b9de8", "#3fb67c", "#f5c92c"], 1], ["cp2", ["#a24df0", "#f0577a", "#ff8f58"], 1],
  ];
  return (
    <svg width="0" height="0" className="absolute">
      <defs>
        {g.map(([id, cs, y]) => (
          <linearGradient key={id} id={id} x1="0" y1="0" x2={y ? ".5" : "1"} y2={y}>
            {cs.map((c, i) => <stop key={c} offset={i / (cs.length - 1)} stopColor={c} />)}
          </linearGradient>
        ))}
      </defs>
    </svg>
  );
}

export default function App() {
  return (
    <div className={"flex h-[1080px] w-[1920px] flex-col overflow-hidden bg-[#eeeeee] " + UI}>
      <Defs />
      <TitleBar />
      <MenuBar />
      <Ribbon />
      <Body />
      <StatusBar />
      <Taskbar />
    </div>
  );
}
